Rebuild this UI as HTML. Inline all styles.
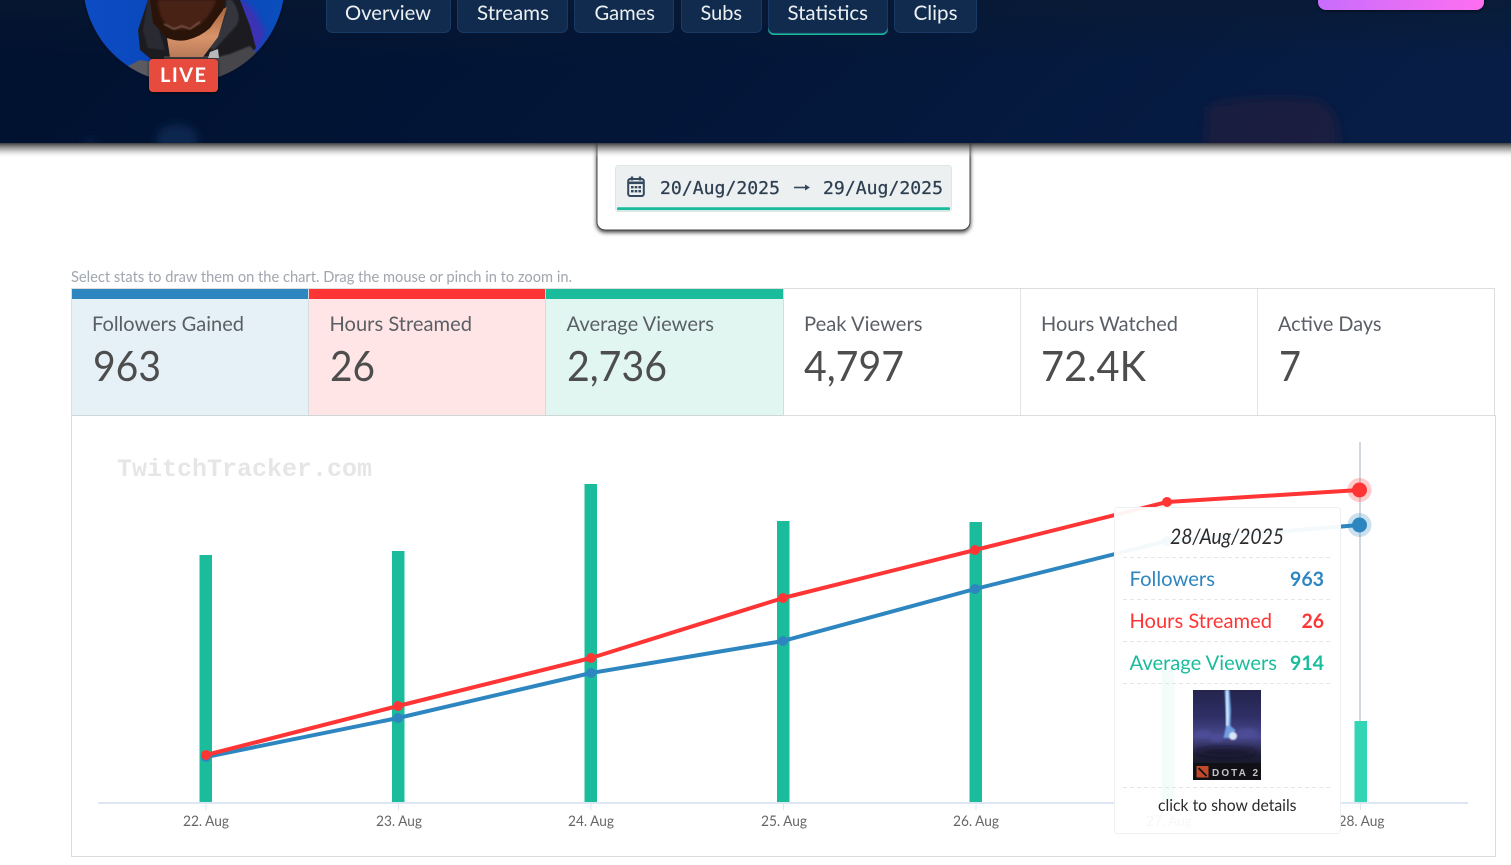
<!DOCTYPE html>
<html lang="en">
<head>
<meta charset="utf-8">
<title>Statistics</title>
<style>
html,body{margin:0;padding:0;background:#fff;width:1511px;height:865px;overflow:hidden}
svg{display:block}
text{font-family:Lato,Carlito,"Liberation Sans",sans-serif}
.nav{fill:#ecf0f1;font-size:20px}
.lab{fill:#5a5f66;font-size:20px}
.val{fill:#4d4d4d;font-size:42px}
.ax{fill:#666;font-size:14px}
.mono{font-family:"DejaVu Sans Mono",monospace;font-size:18px;fill:#2c3e50}
</style>
</head>
<body>
<svg width="1511" height="865" viewBox="0 0 1511 865" xmlns="http://www.w3.org/2000/svg">
<defs>
<linearGradient id="hdr" x1="0" y1="0" x2="1" y2="0.1">
<stop offset="0" stop-color="#00112f"/><stop offset=".5" stop-color="#031638"/><stop offset="1" stop-color="#071d45"/>
</linearGradient>
<linearGradient id="hdrTop" x1="0" y1="0" x2="0" y2="1">
<stop offset="0" stop-color="#0a1a30" stop-opacity=".6"/><stop offset="1" stop-color="#0a1a30" stop-opacity="0"/>
</linearGradient>
<linearGradient id="shade" x1="0" y1="0" x2="0" y2="1">
<stop offset="0" stop-color="#333" stop-opacity=".95"/><stop offset=".5" stop-color="#777" stop-opacity=".45"/><stop offset="1" stop-color="#fff" stop-opacity="0"/>
</linearGradient>
<linearGradient id="pink" x1="0" y1="0" x2="1" y2="0">
<stop offset="0" stop-color="#c86dfd"/><stop offset="1" stop-color="#ff6ef0"/>
</linearGradient>
<linearGradient id="sky" x1="0" y1="0" x2="1" y2="0">
<stop offset="0" stop-color="#0c4cc4"/><stop offset=".6" stop-color="#0a45b8"/><stop offset="1" stop-color="#0a4fbe"/>
</linearGradient>
<linearGradient id="dota" x1="0" y1="0" x2="0" y2="1">
<stop offset="0" stop-color="#24244e"/><stop offset=".3" stop-color="#2f2f66"/><stop offset=".52" stop-color="#4a4a92"/><stop offset=".72" stop-color="#1f1f38"/><stop offset="1" stop-color="#101018"/>
</linearGradient>
<linearGradient id="neck" x1="0" y1="0" x2="0" y2="1">
<stop offset="0" stop-color="#a8623c"/><stop offset=".6" stop-color="#d8946a"/><stop offset="1" stop-color="#b87a58"/>
</linearGradient>
<filter id="b12" x="-60%" y="-60%" width="220%" height="220%"><feGaussianBlur stdDeviation="5"/></filter>
<filter id="b3" x="-40%" y="-40%" width="180%" height="180%"><feGaussianBlur stdDeviation="3"/></filter>
<filter id="b2" x="-30%" y="-30%" width="160%" height="160%"><feGaussianBlur stdDeviation="1.4"/></filter>
<filter id="b1" x="-30%" y="-30%" width="160%" height="160%"><feGaussianBlur stdDeviation=".7"/></filter>
<filter id="sh" x="-10%" y="-20%" width="120%" height="140%"><feDropShadow dx="0" dy="2" stdDeviation="2" flood-color="#000" flood-opacity=".75"/></filter>
<filter id="sh2" x="-10%" y="-20%" width="120%" height="140%"><feDropShadow dx="0" dy="1" stdDeviation="1.5" flood-color="#000" flood-opacity=".6"/></filter>
<clipPath id="hclip"><rect x="0" y="0" width="1511" height="143"/></clipPath>
<clipPath id="av"><circle cx="184" cy="-18" r="101"/></clipPath>
<clipPath id="dc"><rect x="1193" y="690" width="68" height="90"/></clipPath>
</defs>

<rect width="1511" height="865" fill="#fff"/>

<!-- date picker panel -->
<rect x="597" y="120" width="373" height="110" rx="8" fill="#fff" stroke="#444" stroke-width="1" filter="url(#sh)"/>
<rect x="615.500" y="165.500" width="336" height="46" rx="3" fill="#ecf0f1" stroke="#dfe6e6" stroke-width="1"/>
<rect x="617" y="207.300" width="333" height="2.800" rx="1" fill="#1abc9c"/>
<g fill="none" stroke="#34495e">
<rect x="628.200" y="179" width="15.600" height="17" rx="2" stroke-width="2"/>
<path d="M632 176.500v4M640 176.500v4" stroke-width="2.400"/>
<path d="M628 182.800h16" stroke-width="2.600"/>
</g>
<g fill="#34495e"><rect x="631" y="186" width="2.600" height="2.400"/><rect x="634.700" y="186" width="2.600" height="2.400"/><rect x="638.400" y="186" width="2.600" height="2.400"/><rect x="631" y="190" width="2.600" height="2.400"/><rect x="634.700" y="190" width="2.600" height="2.400"/><rect x="638.400" y="190" width="2.600" height="2.400"/></g>
<text class="mono" x="660" y="194" textLength="120" lengthAdjust="spacingAndGlyphs" stroke="#2c3e50" stroke-width=".25">20/Aug/2025</text>
<path d="M794 187.500h13" stroke="#34495e" stroke-width="1.600" fill="none"/><path d="M805 184.500l5 3-5 3z" fill="#34495e"/>
<text class="mono" x="823" y="194" textLength="120" lengthAdjust="spacingAndGlyphs" stroke="#2c3e50" stroke-width=".25">29/Aug/2025</text>

<!-- header shadow -->
<rect x="0" y="143" width="1511" height="15" fill="url(#shade)"/>

<!-- header -->
<g clip-path="url(#hclip)">
<rect width="1511" height="143" fill="url(#hdr)"/>
<rect width="1511" height="60" fill="url(#hdrTop)"/>
<ellipse cx="177" cy="140" rx="21" ry="16" fill="#12305f" fill-opacity=".6" filter="url(#b12)"/>
<ellipse cx="90" cy="145" rx="7" ry="7" fill="#0c2450" fill-opacity=".6" filter="url(#b12)"/>
<path d="M1205 150 L1208 106 Q1250 94 1318 100 Q1342 112 1338 150Z" fill="#241c3e" fill-opacity=".6" filter="url(#b12)"/>
<!-- avatar -->
<circle cx="184" cy="-18" r="103" fill="#06102a"/>
<g clip-path="url(#av)">
<rect x="80" y="-120" width="210" height="210" fill="url(#sky)"/>
<!-- lit purple hood edge -->
<path d="M243 0 L254 10 L266 33 L258 50 L240 50 L236 0Z" fill="#3a30b4" filter="url(#b3)"/>
<!-- hood -->
<path d="M148 0 L138 30 L140 50 L152 60 L240 64 L256 48 L250 26 L240 0Z" fill="#1c1c20"/>
<path d="M232 0 Q243 16 236 26 L214 50 L206 46 Q228 26 226 0Z" fill="#36363c" filter="url(#b1)"/>
<path d="M148 0 L143 30 L148 48 L165 50 L160 34 L152 0Z" fill="#2a2a30" filter="url(#b1)"/>
<!-- shoulders -->
<path d="M120 70 L140 60 L152 62 L158 90 H120Z" fill="#5a5a60"/>
<path d="M214 58 L230 54 L250 46 L262 60 L240 90 H214Z" fill="#46464c" filter="url(#b1)"/>
<path d="M164 56 H216 V90 H164Z" fill="#3c3a3c"/>
<!-- neck -->
<path d="M167 38 L170 57 H203 L218 37 L227 7 L200 20Z" fill="url(#neck)"/>
<path d="M210 52 L218 49 L219 58 L208 58Z" fill="#b8b8bc"/>
<!-- beard -->
<path d="M150 0 L153 23 L167 38 Q178 42 187 40 Q200 37 210 28 L223 10 L225 0Z" fill="#2a140a"/>
<path d="M158 0 Q158 18 170 28 Q185 32 200 24 Q212 14 216 0Z" fill="#4a2416" filter="url(#b2)"/>
<path d="M164 24l10 5 8-3 8 3 10-7" stroke="#8e6a58" stroke-width="1.200" fill="none" filter="url(#b1)"/>
</g>
<!-- nav -->
<g fill="#112b4f" stroke="#1a3a66" stroke-width="1">
<rect x="326.500" y="-10" width="124" height="42.500" rx="6"/>
<rect x="457.500" y="-10" width="110" height="42.500" rx="6"/>
<rect x="574.500" y="-10" width="99" height="42.500" rx="6"/>
<rect x="681.500" y="-10" width="80" height="42.500" rx="6"/>
<rect x="894.500" y="-10" width="82" height="42.500" rx="6"/>
</g>
<rect x="768" y="-10" width="120" height="45" rx="6" fill="#1abc9c"/>
<rect x="768.500" y="-10" width="119" height="43" rx="6" fill="#112b4f" stroke="#1a3a66" stroke-width="1"/>
<text class="nav" x="345" y="20" textLength="86" lengthAdjust="spacingAndGlyphs">Overview</text>
<text class="nav" x="477" y="20" textLength="72" lengthAdjust="spacingAndGlyphs">Streams</text>
<text class="nav" x="594.500" y="20" textLength="60.500" lengthAdjust="spacingAndGlyphs">Games</text>
<text class="nav" x="700.500" y="20" textLength="41.500" lengthAdjust="spacingAndGlyphs">Subs</text>
<text class="nav" x="787.500" y="20" textLength="80.500" lengthAdjust="spacingAndGlyphs">Statistics</text>
<text class="nav" x="913.500" y="20" textLength="44" lengthAdjust="spacingAndGlyphs">Clips</text>
<!-- pink button -->
<rect x="1318" y="-20" width="166" height="30" rx="8" fill="url(#pink)" filter="url(#sh2)"/>
<!-- live -->
<rect x="149" y="59" width="69" height="33" rx="4" fill="#e74c3c" filter="url(#sh2)"/>
<text x="160" y="82" font-size="20" font-weight="700" fill="#fff" textLength="46" lengthAdjust="spacing">LIVE</text>
</g>

<!-- hint -->
<text x="71" y="282" font-size="15" fill="#a0a6ae" textLength="501" lengthAdjust="spacingAndGlyphs">Select stats to draw them on the chart. Drag the mouse or pinch in to zoom in.</text>

<!-- stats -->
<rect x="71.500" y="288.500" width="1423" height="127" fill="#fff" stroke="#ddd"/>
<rect x="72" y="299" width="236" height="116" fill="#e5f0f7"/>
<rect x="309" y="299" width="236" height="116" fill="#ffe5e5"/>
<rect x="546" y="299" width="237" height="116" fill="#e1f6f0"/>
<rect x="72" y="289" width="236" height="10" fill="#2e86c1"/>
<rect x="309" y="289" width="236" height="10" fill="#ff3535"/>
<rect x="546" y="289" width="237" height="10" fill="#1abc9c"/>
<g stroke="#d5dcdc" stroke-width="1">
<path d="M308.500 289V415M545.500 289V415M783.500 289V415"/>
</g>
<g stroke="#e4e4e4" stroke-width="1"><path d="M1020.500 289V415M1257.500 289V415"/></g>
<path d="M71 415.500H783" stroke="#cfd6d9"/>

<text class="lab" x="92" y="331" textLength="152" lengthAdjust="spacingAndGlyphs">Followers Gained</text>
<text class="lab" x="329.500" y="331" textLength="142.500" lengthAdjust="spacingAndGlyphs">Hours Streamed</text>
<text class="lab" x="566.500" y="331" textLength="147.500" lengthAdjust="spacingAndGlyphs">Average Viewers</text>
<text class="lab" x="804" y="331" textLength="118.500" lengthAdjust="spacingAndGlyphs">Peak Viewers</text>
<text class="lab" x="1041" y="331" textLength="137" lengthAdjust="spacingAndGlyphs">Hours Watched</text>
<text class="lab" x="1278" y="331" textLength="103.500" lengthAdjust="spacingAndGlyphs">Active Days</text>

<text class="val" x="93" y="381" textLength="68" lengthAdjust="spacingAndGlyphs">963</text>
<text class="val" x="330" y="381" textLength="45" lengthAdjust="spacingAndGlyphs">26</text>
<text class="val" x="567" y="381" textLength="100" lengthAdjust="spacingAndGlyphs">2,736</text>
<text class="val" x="804" y="381" textLength="100" lengthAdjust="spacingAndGlyphs">4,797</text>
<text class="val" x="1041" y="381" textLength="105" lengthAdjust="spacingAndGlyphs">72.4K</text>
<text class="val" x="1279" y="381" textLength="22" lengthAdjust="spacingAndGlyphs">7</text>

<!-- chart box -->
<path d="M71.500 415V856.500H1495.500V415" fill="none" stroke="#dcdcdc"/>
<text x="117" y="476" style="font-family:'Liberation Mono',monospace" font-size="25" font-weight="700" fill="#e6e6e6" textLength="255" lengthAdjust="spacingAndGlyphs">TwitchTracker.com</text>

<!-- axis -->
<path d="M98 803H1468" stroke="#dfe6f3" stroke-width="2"/>
<path d="M1360 442V803" stroke="#d3d8de" stroke-width="2"/>
<path d="M206 803v7M398.500 803v7M591 803v7M783.500 803v7M976 803v7M1168 803v7M1360.500 803v7" stroke="#dfe6f3"/>

<!-- bars -->
<g fill="#1abc9c">
<rect x="199.500" y="555" width="12.500" height="247"/>
<rect x="392" y="551" width="12.500" height="251"/>
<rect x="584.500" y="484" width="12.500" height="318"/>
<rect x="777" y="521" width="12.500" height="281"/>
<rect x="969.500" y="522" width="12.500" height="280"/>
<rect x="1162" y="670" width="12.500" height="132"/>
</g>
<rect x="1354.500" y="721" width="12.500" height="81" fill="#32d6b4"/>

<!-- lines -->
<polyline points="206,757 398,718 591,673 783,641 975,589 1167,541 1359.500,525" fill="none" stroke="#2e86c1" stroke-width="4" stroke-linejoin="round"/>
<polyline points="206,755 398,706 591,658 783,598 975,550 1167,502 1359.500,490" fill="none" stroke="#ff3535" stroke-width="4" stroke-linejoin="round"/>
<g fill="#2e86c1"><circle cx="206" cy="757" r="5"/><circle cx="398" cy="718" r="5"/><circle cx="591" cy="673" r="5"/><circle cx="783" cy="641" r="5"/><circle cx="975" cy="589" r="5"/><circle cx="1167" cy="541" r="5"/></g>
<g fill="#ff3535"><circle cx="206" cy="755" r="5"/><circle cx="398" cy="706" r="5"/><circle cx="591" cy="658" r="5"/><circle cx="783" cy="598" r="5"/><circle cx="975" cy="550" r="5"/><circle cx="1167" cy="502" r="5"/></g>
<circle cx="1359.500" cy="525" r="12" fill="#2e86c1" fill-opacity=".25"/><circle cx="1359.500" cy="525" r="7.500" fill="#2e86c1"/>
<circle cx="1359.500" cy="490" r="12" fill="#ff3535" fill-opacity=".25"/><circle cx="1359.500" cy="490" r="7.500" fill="#ff3535"/>

<!-- axis labels -->
<text class="ax" x="183" y="826" textLength="46" lengthAdjust="spacingAndGlyphs">22. Aug</text>
<text class="ax" x="376" y="826" textLength="46" lengthAdjust="spacingAndGlyphs">23. Aug</text>
<text class="ax" x="568" y="826" textLength="46" lengthAdjust="spacingAndGlyphs">24. Aug</text>
<text class="ax" x="761" y="826" textLength="46" lengthAdjust="spacingAndGlyphs">25. Aug</text>
<text class="ax" x="953" y="826" textLength="46" lengthAdjust="spacingAndGlyphs">26. Aug</text>
<text class="ax" x="1146" y="826" textLength="46" lengthAdjust="spacingAndGlyphs">27. Aug</text>
<text class="ax" x="1338.500" y="826" textLength="46" lengthAdjust="spacingAndGlyphs">28. Aug</text>

<!-- tooltip -->
<rect x="1114.500" y="507.500" width="226" height="326" rx="3" fill="#fff" fill-opacity=".95" stroke="#eef1f4"/>
<g stroke="#e6e6e6" stroke-dasharray="4 3"><path d="M1123 557.500H1330M1123 599.500H1330M1123 641.500H1330M1123 683.500H1330M1123 787.500H1330"/></g>
<text x="1170" y="544" font-size="21" font-style="italic" fill="#2b2b2b" textLength="114" lengthAdjust="spacingAndGlyphs">28/Aug/2025</text>
<g font-size="20">
<text x="1129.500" y="586" fill="#2e86c1" textLength="85.500" lengthAdjust="spacingAndGlyphs">Followers</text>
<text x="1290" y="586" fill="#2e86c1" font-weight="700" textLength="34" lengthAdjust="spacingAndGlyphs">963</text>
<text x="1129.500" y="628" fill="#ff3535" textLength="142.500" lengthAdjust="spacingAndGlyphs">Hours Streamed</text>
<text x="1301.500" y="628" fill="#ff3535" font-weight="700" textLength="22.500" lengthAdjust="spacingAndGlyphs">26</text>
<text x="1129.500" y="670" fill="#1abc9c" textLength="147.500" lengthAdjust="spacingAndGlyphs">Average Viewers</text>
<text x="1290" y="670" fill="#1abc9c" font-weight="700" textLength="34" lengthAdjust="spacingAndGlyphs">914</text>
</g>
<g clip-path="url(#dc)">
<rect x="1193" y="690" width="68" height="90" fill="url(#dota)"/>
<g filter="url(#b2)" fill="#4e4e98" fill-opacity=".8">
<ellipse cx="1203" cy="734" rx="9" ry="4"/><ellipse cx="1217" cy="738" rx="7" ry="4"/><ellipse cx="1247" cy="733" rx="10" ry="5"/>
</g>
<g filter="url(#b3)" fill="#14142a" fill-opacity=".7">
<ellipse cx="1226" cy="752" rx="30" ry="5"/>
</g>
<path d="M1224.500 690h5l1.500 20-.5 16 5 4-4 8h-8l3-14z" fill="#6f9ee0" filter="url(#b1)"/>
<path d="M1226 690h2.200l.8 26-.5 10h-2.500z" fill="#cbe6fa" filter="url(#b1)"/>
<circle cx="1233" cy="736" r="4" fill="#dbe4f6" filter="url(#b1)"/>
<rect x="1193" y="763" width="68" height="17" fill="#101016"/>
<rect x="1196.500" y="766" width="12" height="11.500" fill="#c04a2a"/>
<path d="M1198.500 768l8 8" stroke="#111" stroke-width="1.800"/>
<text x="1212" y="776" font-size="10" font-weight="700" fill="#c4c4c4" textLength="46" lengthAdjust="spacing" style="font-family:'Liberation Sans',sans-serif">DOTA 2</text>
</g>
<text x="1158" y="811" font-size="16" fill="#2b2b2b" textLength="138.500" lengthAdjust="spacingAndGlyphs">click to show details</text>
</svg>
</body>
</html>
